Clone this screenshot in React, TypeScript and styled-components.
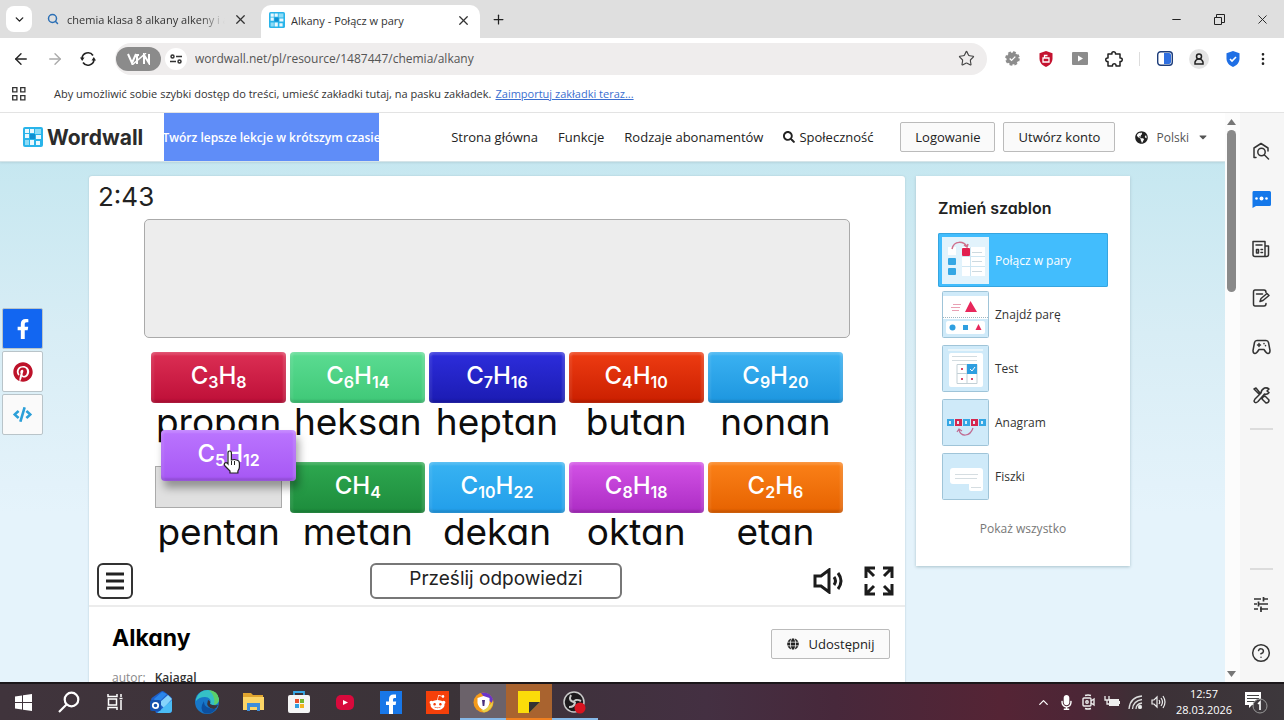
import React from "react";
import styled, { createGlobalStyle } from "styled-components";
import {
  ArrowLeft, ArrowRight, ChevronDown, ChevronUp, Minus, MoreVertical, Plus, RefreshCw,
  Search, Star, X, CircleHelp,
} from "lucide-react";
import {
  FaFacebookF, FaPinterest, FaCode, FaSearch, FaGlobeAmericas, FaGlobe, FaRedditAlien, FaCaretDown, FaMicrophone,
} from "react-icons/fa";

const ui = `"Open Sans", "Noto Sans", sans-serif`;
const game = `Inter, "Open Sans", sans-serif`;

const Global = createGlobalStyle`
  * { box-sizing: border-box; }
  body { margin: 0; font-family: ${ui}; color: #222; background: #fff; }
  button { font: inherit; color: inherit; padding: 0; margin: 0; border: 0; background: none; display: inline-flex; align-items: center; justify-content: center; }
  a { color: inherit; text-decoration: none; }
  svg { flex: none; display: block; }
  h1, h2, p { margin: 0; }
`;

const Window = styled.div`
  display: flex;
  flex-direction: column;
  height: 100vh;
  overflow: hidden;
`;

/* ---------- browser chrome ---------- */

const TabStrip = styled.div`
  display: flex;
  align-items: flex-end;
  height: 38px;
  background: #dfdfdf;
  padding-left: 6px;
`;

const TabMenu = styled.button`
  width: 26px;
  height: 26px;
  margin-bottom: 6px;
  border-radius: 8px;
  background: #fff;
`;

const Tab = styled.div<{ $active?: boolean }>`
  display: flex;
  align-items: center;
  gap: ${(p) => (p.$active ? 6 : 8)}px;
  width: ${(p) => (p.$active ? 219 : 225)}px;
  height: ${(p) => (p.$active ? 33 : 38)}px;
  padding: 0 9px ${(p) => (p.$active ? 3 : 0)}px ${(p) => (p.$active ? 8 : 15)}px;
  margin-left: ${(p) => (p.$active ? 4 : 0)}px;
  border-radius: 10px 10px 0 0;
  background: ${(p) => (p.$active ? "#fff" : "transparent")};
  font-size: 11px;
  color: #333;
`;

const TabTitle = styled.span<{ $fade?: boolean }>`
  flex: 1;
  min-width: 0;
  overflow: hidden;
  white-space: nowrap;
  ${(p) => p.$fade && "mask-image: linear-gradient(90deg, #000 84%, transparent 100%);"}
`;

const NewTab = styled.button`
  width: 28px;
  height: 28px;
  margin: 0 0 5px 4px;
`;

const WindowButtons = styled.div`
  display: flex;
  margin-left: auto;
  height: 38px;
`;

const WindowButton = styled.button`
  width: 43px;
  height: 38px;
`;

const Toolbar = styled.div`
  display: flex;
  align-items: center;
  height: 41px;
  padding: 0 8px 0 6px;
  background: #fff;
`;

const ToolButton = styled.button<{ $w?: number }>`
  width: ${(p) => p.$w ?? 34}px;
  height: 32px;
`;

const AddressBar = styled.div`
  display: flex;
  align-items: center;
  flex: 1;
  height: 32px;
  margin: 0 8px 0 13px;
  padding: 0 12px 0 1px;
  border-radius: 16px;
  background: #efeded;
`;

const VpnBadge = styled.span`
  display: flex;
  align-items: center;
  justify-content: center;
  width: 45px;
  height: 24px;
  border-radius: 12px;
  background: #8b8b8b;
`;

const SiteInfo = styled.button`
  width: 22px;
  height: 22px;
  margin: 0 6px 0 4px;
  border-radius: 11px;
  background: #fff;
`;

const AddressInput = styled.input`
  flex: 1;
  min-width: 0;
  border: 0;
  outline: 0;
  background: transparent;
  font: 12px ${ui};
  color: #555;
`;

const Divider = styled.span`
  width: 1px;
  height: 14px;
  margin: 0 8px;
  background: #ddd;
`;

const Avatar = styled.span`
  display: grid;
  place-items: center;
  width: 20px;
  height: 20px;
  border-radius: 50%;
  background: #e4e4e4;
`;

const Bookmarks = styled.div`
  display: flex;
  align-items: center;
  height: 34px;
  padding: 0 12px 4px;
  border-bottom: 1px solid #e3e3e3;
  font-size: 11px;
  color: #333;
  white-space: nowrap;
  a { margin-left: 4px; color: #3b6fd0; text-decoration: underline; }
  svg { margin-right: 28px; }
`;

/* ---------- page ---------- */

const Body = styled.div`
  display: flex;
  flex: 1;
  min-height: 0;
`;

const Page = styled.div`
  position: relative;
  flex: 1;
  min-width: 0;
  overflow: hidden;
  background: linear-gradient(#c5e7f0 40px, #d8edf5 220px, #e5f3fb 400px);
`;

const Header = styled.header`
  display: flex;
  align-items: center;
  height: 49px;
  padding: 0 16px 0 23px;
  background: #fff;
  border-bottom: 1px solid #d5e4e8;
  box-shadow: 0 1px 2px #b5d3dc;
`;

const Logo = styled.a`
  display: flex;
  align-items: center;
  gap: 4px;
  width: 141px;
  font: 700 21px ${game};
  color: #2b2b2b;
`;

const Promo = styled.a`
  display: flex;
  align-items: center;
  justify-content: center;
  width: 215px;
  height: 48px;
  background: #5f8df8;
  color: #fff;
  font-size: 12px;
  font-weight: 600;
  white-space: nowrap;
`;

const Nav = styled.nav`
  display: flex;
  align-items: center;
  margin-left: auto;
  gap: 20px;
  font-size: 13px;
  white-space: nowrap;
  a { display: flex; align-items: center; gap: 4px; }
`;

const OutlineButton = styled.button<{ $w: number }>`
  width: ${(p) => p.$w}px;
  height: 30px;
  gap: 10px;
  border: 1px solid #bbb;
  border-radius: 2px;
  background: #fafafa;
  font-size: 13px;
`;

const Account = styled.div`
  display: flex;
  gap: 8px;
  margin-left: 7px;
`;

const Language = styled.button`
  gap: 8px;
  font-size: 12px;
  color: #555;
`;

const Columns = styled.main`
  display: flex;
  align-items: flex-start;
  gap: 11px;
  padding: 14px 95px 0 89px;
`;

const GameCard = styled.section`
  flex: 1;
  min-width: 0;
  background: #fff;
  border-radius: 3px;
  box-shadow: 0 0 2px #a9c3cc;
`;

const Timer = styled.div`
  height: 43px;
  padding: 4px 9px;
  font: 26px/34px ${game};
`;

const Tray = styled.div`
  height: 119px;
  margin: 0 55px;
  border: 1px solid #aaa;
  border-radius: 5px;
  background: #ededed;
`;

const Board = styled.div`
  display: grid;
  grid-template-columns: repeat(5, 1fr);
  grid-template-rows: 110px 94px;
  gap: 0 4px;
  padding: 14px 62px 0;
`;

const Cell = styled.div`
  position: relative;
  text-align: center;
`;

const Tile = styled.button<{ $from: string; $to: string; $dragged?: boolean }>`
  position: ${(p) => (p.$dragged ? "absolute" : "static")};
  z-index: 1;
  left: 10px;
  top: -32px;
  display: block;
  width: 100%;
  height: 51px;
  padding-bottom: 4px;
  border-radius: 4px;
  background: linear-gradient(${(p) => p.$from}, ${(p) => p.$to});
  box-shadow: inset 0 3px 2px rgba(255, 255, 255, 0.14), inset -3px 0 2px rgba(255, 255, 255, 0.12),
    inset 3px 0 2px rgba(255, 255, 255, 0.08), inset 0 -3px 2px rgba(0, 0, 0, 0.12)
    ${(p) => p.$dragged && ", 3px 7px 8px rgba(0, 0, 0, 0.35)"};
  color: #fff;
  font: 500 24px/44px ${game};
  sub { font-size: 16px; line-height: 0; vertical-align: -4px; font-weight: 600; }
`;

const Slot = styled.div`
  height: 42px;
  margin: 4px 4px 5px;
  border: 1px solid #aaa;
  background: #e0e0e0;
`;

const Label = styled.div`
  font: 37px/37px ${game};
  font-feature-settings: "cv11";
  color: #0d0d0d;
`;

const Pointer = styled.svg`
  position: absolute;
  z-index: 2;
  left: 72px;
  top: -12px;
`;

const Controls = styled.div`
  display: grid;
  grid-template-columns: 1fr 252px 1fr;
  align-items: center;
  height: 51px;
  padding: 0 10px 0 8px;
  border-bottom: 2px solid #ececec;
`;

const MenuButton = styled.button`
  width: 36px;
  height: 36px;
  border: 2px solid #333;
  border-radius: 6px;
`;

const SubmitButton = styled.button`
  height: 36px;
  border: 2px solid #777;
  border-radius: 6px;
  font: 19px ${game};
  padding-bottom: 4px;
`;

const RightControls = styled.div`
  display: flex;
  align-items: center;
  justify-content: flex-end;
  gap: 18px;
`;

const Info = styled.div`
  display: flex;
  align-items: flex-start;
  justify-content: space-between;
  padding: 16px 15px 40px 23px;
`;

const Title = styled.h1`
  font: 700 23px/30px ${game};
  font-feature-settings: "cv11";
  color: #000;
`;

const Author = styled.p`
  margin-top: 16px;
  font-size: 12px;
  line-height: 18px;
  color: #888;
  a { margin-left: 6px; color: #333; font-weight: 600; }
`;

const ShareWrap = styled.div`
  padding-top: 6px;
`;

const Templates = styled.aside`
  width: 214px;
  padding: 20px 22px 27px;
  background: #fff;
  box-shadow: 0 1px 3px #a9c3cc;
`;

const TemplatesTitle = styled.h2`
  margin-bottom: 13px;
  font: 600 16px/24px ${game};
  font-feature-settings: "cv11";
  white-space: nowrap;
`;

const Template = styled.a<{ $active?: boolean }>`
  display: flex;
  align-items: center;
  gap: 6px;
  height: 54px;
  padding-left: 4px;
  border-radius: 2px;
  font-size: 12px;
  background: ${(p) => (p.$active ? "#42bdfd" : "transparent")};
  color: ${(p) => (p.$active ? "#fff" : "#333")};
  box-shadow: ${(p) => (p.$active ? "inset 0 0 0 1px #36a5e0" : "none")};
`;

const ShowAll = styled.a`
  display: block;
  margin-top: 16px;
  text-align: center;
  font-size: 12px;
  line-height: 20px;
  color: #777;
`;

const Social = styled.div`
  position: absolute;
  left: 2px;
  top: 195px;
  display: grid;
  gap: 2px;
`;

const SocialButton = styled.a<{ $bg: string; $fg: string }>`
  display: grid;
  place-items: center;
  width: 41px;
  height: 41px;
  border: 1px solid #b9c4c9;
  border-radius: 2px;
  background: ${(p) => p.$bg};
  color: ${(p) => p.$fg};
`;

const Scrollbar = styled.div`
  display: flex;
  flex-direction: column;
  align-items: center;
  justify-content: space-between;
  width: 15px;
  padding: 6px 2px 5px 0;
  background: #fcfcfc;
`;

const ScrollTrack = styled.div`
  flex: 1;
  padding-top: 5px;
`;

const Thumb = styled.div`
  width: 9px;
  height: 30%;
  border-radius: 5px;
  background: #8a8a8a;
`;

const SidePanel = styled.aside`
  display: flex;
  flex-direction: column;
  align-items: center;
  width: 44px;
  padding: 13px 2px 5px 0;
  background: #f6f6f6;
  color: #333;
`;

const SideButton = styled.button`
  width: 40px;
  height: 49px;
  flex: none;
`;

const SideRule = styled.span<{ $push?: boolean }>`
  width: 23px;
  height: 2px;
  margin-top: ${(p) => (p.$push ? "auto" : "8px")};
  margin-bottom: ${(p) => (p.$push ? "9px" : "0")};
  background: #dcdcdc;
`;

/* ---------- taskbar ---------- */

const Taskbar = styled.footer`
  display: flex;
  align-items: stretch;
  height: 38px;
  border-top: 2px solid #1b171a;
  background: linear-gradient(90deg, #40343c 0, #3b3338 35%, #443042 55%, #47283b 65%, #552435 78%, #4c2636 84%, #3c3036 89%, #3d383c 100%);
  color: #fff;
`;

const TaskItem = styled.button<{ $tint?: string; $line?: string }>`
  width: 46px;
  background: ${(p) => p.$tint ?? "transparent"};
  box-shadow: ${(p) => (p.$line ? `inset 0 -2px 0 ${p.$line}` : "none")};
`;

const StatusArea = styled.div`
  display: flex;
  align-items: center;
  gap: 8px;
  margin-left: auto;
  padding-right: 16px;
`;

const Clock = styled.div`
  width: 60px;
  margin-right: 2px;
  text-align: center;
  font-size: 11px;
  line-height: 16px;
`;

/* ---------- drawings ---------- */

const WordwallMark = ({ size }: { size: number }) => (
  <svg width={size} height={size} viewBox="0 0 20 20">
    <rect width="20" height="20" rx="2" fill="#29b4ea" />
    <path fill="#e9f8fe" d="M2 2h4v4H2zM7 2h4v4H7zM2 7h4v4H2zM13 8h5v4h-5zM7 13h4v5H7zM13 14h4v4h-4z" />
    <path fill="#8ddcf7" d="M12 2h6v5h-6zM2 13h4v5H2z" />
    <path fill="#0f8fd0" d="M7 7h5v5H7z" />
  </svg>
);

const line = { fill: "none", stroke: "currentColor", strokeWidth: 1.5, strokeLinecap: "round", strokeLinejoin: "round" } as const;

const Thumbnail = ({ kind }: { kind: number }) => (
  <svg width="47" height="47" viewBox="0 0 47 47">
    <rect x=".5" y=".5" width="46" height="46" rx="1" fill={kind === 1 ? "#fff" : "#cfeaf9"} stroke="#9fc4d8" />
    {kind === 0 && (
      <g>
        <rect width="47" height="47" fill="#e2f3fc" />
        <path fill="#fff" d="M6 10h8v8H6zM20 10h23v29H20z" />
        <path stroke="#cfe6f2" d="M28.500 10v29M20 19.500h23M20 29.500h23" />
        <path fill="none" stroke="#d0708c" strokeWidth="1.500" d="M10 12c2-9 12-8 15-2M22 8l3 2 1-3" />
        <rect x="20" y="11" width="8" height="8" rx="1" fill="#e2204f" />
        <rect x="6" y="21" width="8" height="7" rx="1" fill="#35a7e4" />
        <rect x="6" y="31" width="8" height="7" rx="1" fill="#35a7e4" />
        <path stroke="#cdd9df" d="M30 15.500h10M30 24.500h10M30 34.500h10" />
      </g>
    )}
    {kind === 1 && (
      <g>
        <path fill="#cfeaf9" d="M1 1h45v4H1zM1 28h45v18H1z" />
        <path stroke="#9db5c0" strokeDasharray="1 1" d="M1 26.500h45" />
        <path fill="#e8275b" d="M28.500 10l6.500 11H23zM36 34l3 5.500h-6z" />
        <path stroke="#e9a0b3" d="M11 13.500h8M9 16.500h9M10 19.500h7" />
        <rect x="4" y="30" width="39" height="13" rx="2" fill="#fff" />
        <path fill="#e8275b" d="M36.500 33l3 6h-6z" />
        <circle cx="10.500" cy="36.500" r="3" fill="#2f9fe0" />
        <rect x="21" y="34" width="5" height="5" fill="#2f9fe0" />
      </g>
    )}
    {kind === 2 && (
      <g>
        <rect x="6" y="4" width="35" height="2" fill="#e8f5fb" />
        <rect x="7" y="8" width="34" height="34" rx="2" fill="#fff" />
        <path stroke="#d3dce0" d="M10 11.500h25M10 15.500h25" />
        <path fill="none" stroke="#c3d0d6" d="M15 19.500h20v19H15zM15 28.500h20M25 19v19" />
        <rect x="25" y="19" width="10" height="10" fill="#2f9fe0" />
        <path fill="none" stroke="#fff" d="M28 24l2 2 3-4" />
        <path fill="#d84a6a" d="M19 23h2v2h-2zM19 33h2v2h-2zM29 33h2v2h-2z" />
      </g>
    )}
    {kind === 3 && (
      <g>
        {[0, 1, 2, 3, 4].map((i) => (
          <g key={i}>
            <rect x={5 + i * 8} y="20" width="7" height="7" fill={i % 2 ? "#d5284f" : "#35a7e4"} />
            <rect x={7 + i * 8} y="22" width="2" height="3" fill="#d9eefa" />
          </g>
        ))}
        <path fill="none" stroke="#c06a90" strokeWidth="1.200" d="M17 31c2 7 11 7 14-2M15 33l2-3 3 2" />
      </g>
    )}
    {kind === 4 && (
      <g>
        <rect x="8" y="15" width="33" height="16" rx="3" fill="#fff" />
        <rect x="27" y="28" width="14" height="10" rx="2" fill="#fff" />
        <path stroke="#d5dde1" d="M13 21.500h23M13 25.500h22M29 34.500h10" />
      </g>
    )}
  </svg>
);

const Shield = ({ color, children }: { color: string; children: React.ReactNode }) => (
  <svg width="16" height="16" viewBox="0 0 16 16">
    <path fill={color} d="M8 0l6.500 2.300v5.200c0 4-2.700 7-6.500 8.500-3.800-1.500-6.500-4.500-6.500-8.500V2.300z" />
    {children}
  </svg>
);

const tiles: { name: string; formula: [string, string][]; from: string; to: string }[] = [
  { name: "propan", formula: [["C", "3"], ["H", "8"]], from: "#dc2f54", to: "#be0f38" },
  { name: "heksan", formula: [["C", "6"], ["H", "14"]], from: "#5bdc92", to: "#3fc877" },
  { name: "heptan", formula: [["C", "7"], ["H", "16"]], from: "#2d2ddc", to: "#1b1bb2" },
  { name: "butan", formula: [["C", "4"], ["H", "10"]], from: "#ee3c12", to: "#ca1f00" },
  { name: "nonan", formula: [["C", "9"], ["H", "20"]], from: "#3bb2f2", to: "#1d96df" },
  { name: "pentan", formula: [["C", "5"], ["H", "12"]], from: "#bb75ff", to: "#a657f4" },
  { name: "metan", formula: [["CH", "4"]], from: "#2ea850", to: "#1d8c3c" },
  { name: "dekan", formula: [["C", "10"], ["H", "22"]], from: "#38b3f2", to: "#229eea" },
  { name: "oktan", formula: [["C", "8"], ["H", "18"]], from: "#d353e6", to: "#ac2cc4" },
  { name: "etan", formula: [["C", "2"], ["H", "6"]], from: "#fb8118", to: "#e66200" },
];

const templates = ["Połącz w pary", "Znajdź parę", "Test", "Anagram", "Fiszki"];

export default function App() {
  return (
    <Window>
      <Global />
      <TabStrip>
        <TabMenu aria-label="Karty"><ChevronDown size={13} strokeWidth={2.5} /></TabMenu>
        <Tab>
          <Search size={12} strokeWidth={3} color="#2b6fb5" />
          <TabTitle $fade>chemia klasa 8 alkany alkeny i a</TabTitle>
          <button aria-label="Zamknij kartę"><X size={15} /></button>
        </Tab>
        <Tab $active>
          <WordwallMark size={16} />
          <TabTitle>Alkany - Połącz w pary</TabTitle>
          <button aria-label="Zamknij kartę"><X size={15} /></button>
        </Tab>
        <NewTab aria-label="Nowa karta"><Plus size={15} /></NewTab>
        <WindowButtons>
          <WindowButton aria-label="Minimalizuj"><Minus size={13} /></WindowButton>
          <WindowButton aria-label="Przywróć">
            <svg width="11" height="11" viewBox="0 0 11 11" fill="none" stroke="#222"><path d="M.5 3.500h7v7h-7zM2.500 3V.5h8v8H8" /></svg>
          </WindowButton>
          <WindowButton aria-label="Zamknij"><X size={15} strokeWidth={1.5} /></WindowButton>
        </WindowButtons>
      </TabStrip>

      <Toolbar>
        <ToolButton $w={29} aria-label="Wstecz"><ArrowLeft size={18} strokeWidth={1.8} /></ToolButton>
        <ToolButton $w={39} aria-label="Dalej"><ArrowRight size={18} strokeWidth={1.8} color="#aaa" /></ToolButton>
        <ToolButton $w={28} aria-label="Odśwież">
          <svg width="16" height="16" viewBox="0 0 16 16" fill="none" stroke="#222" strokeWidth="1.600"><path d="M2 7.500a6 6 0 0 1 11-3M14 8.500a6 6 0 0 1-11 3" /><path fill="#222" stroke="none" d="M0 6.500h4.500L2.200 10zM11.500 9.500H16L13.800 6z" /></svg>
        </ToolButton>
        <AddressBar>
          <VpnBadge>
            <svg width="24" height="12" viewBox="0 0 24 12" fill="none" stroke="#fff" strokeWidth="2">
              <path d="M1 1l4 9 4-9M10 11V2h2M17 11V2l5 8V1" /><path d="M5 12L19 0" strokeWidth="1.500" />
            </svg>
          </VpnBadge>
          <SiteInfo aria-label="Informacje o witrynie">
            <svg width="12" height="10" viewBox="0 0 12 10" fill="none" stroke="#333" strokeWidth="1.500">
              <circle cx="2.500" cy="2.500" r="1.500" /><circle cx="9.500" cy="7.500" r="1.500" /><path d="M6 2.500h6M0 7.500h6" />
            </svg>
          </SiteInfo>
          <AddressInput aria-label="Adres" defaultValue="wordwall.net/pl/resource/1487447/chemia/alkany" />
          <Star size={17} strokeWidth={1.6} color="#444" />
        </AddressBar>
        <ToolButton aria-label="Weryfikacja">
          <svg width="15" height="15" viewBox="0 0 16 16"><circle cx="8" cy="8" r="6.500" fill="#8c8c8c" /><circle cx="8" cy="8" r="6.800" fill="none" stroke="#8c8c8c" strokeWidth="2" strokeDasharray="3 2.300" /><path d="M5 8l2 2 4-4" fill="none" stroke="#fff" strokeWidth="1.500" /></svg>
        </ToolButton>
        <ToolButton aria-label="Blokada reklam">
          <Shield color="#c4122f"><path d="M5 7h6v4H5zM6.500 7V4.500h3" fill="none" stroke="#fff" strokeWidth="1.300" /></Shield>
        </ToolButton>
        <ToolButton aria-label="Wideo">
          <svg width="16" height="13" viewBox="0 0 16 13"><rect width="16" height="13" rx="1" fill="#8c8c8c" /><path fill="#fff" d="M6 3.500l5 3-5 3z" /></svg>
        </ToolButton>
        <ToolButton aria-label="Rozszerzenia">
          <svg width="18" height="18" viewBox="0 0 18 18" fill="none" stroke="#222" strokeWidth="1.500" strokeLinejoin="round"><path d="M3 4h4c-1-3 4-3 3.500 0H15v4c3-.5 3 4 0 3.500V16h-4c.5-3-4-3-3.500 0H3v-4.500c-3 .5-3-4 0-3.500z" /></svg>
        </ToolButton>
        <Divider />
        <ToolButton aria-label="Panel boczny">
          <svg width="16" height="15" viewBox="0 0 16 15"><rect x=".7" y=".7" width="14.600" height="13.600" rx="3" fill="#fff" stroke="#1d3d7a" strokeWidth="1.400" /><path fill="#2f6fe0" d="M7 2h5q2 0 2 2v7q0 2-2 2H7z" /></svg>
        </ToolButton>
        <ToolButton aria-label="Profil">
          <Avatar><svg width="10" height="12" viewBox="0 0 10 12" fill="none" stroke="#222" strokeWidth="1.500"><circle cx="5" cy="3.500" r="2.500" /><path d="M1 11V9q1-3 4-3t4 3v2z" /></svg></Avatar>
        </ToolButton>
        <ToolButton aria-label="Ochrona">
          <Shield color="#1f6fe5"><path d="M5 8l2 2 4-4" fill="none" stroke="#fff" strokeWidth="1.600" /></Shield>
        </ToolButton>
        <ToolButton $w={26} aria-label="Menu"><MoreVertical size={16} /></ToolButton>
      </Toolbar>

      <Bookmarks>
        <svg width="14" height="14" viewBox="0 0 14 14" fill="none" stroke="#333" strokeWidth="1.300"><path d="M.7.7h4.200v4.200H.7zM8.700.7h4.200v4.200H8.700zM.7 8.700h4.200v4.200H.7zM8.700 8.700h4.200v4.200H8.700z" /></svg>
        Aby umożliwić sobie szybki dostęp do treści, umieść zakładki tutaj, na pasku zakładek.
        <a href="#import">Zaimportuj zakładki teraz...</a>
      </Bookmarks>

      <Body>
        <Page>
          <Header>
            <Logo href="#home"><WordwallMark size={20} />Wordwall</Logo>
            <Promo href="#promo">Twórz lepsze lekcje w krótszym czasie</Promo>
            <Nav>
              <a href="#home">Strona główna</a>
              <a href="#features">Funkcje</a>
              <a href="#plans">Rodzaje abonamentów</a>
              <a href="#community"><FaSearch size={12} />Społeczność</a>
              <Account>
                <OutlineButton $w={95}>Logowanie</OutlineButton>
                <OutlineButton $w={112}>Utwórz konto</OutlineButton>
              </Account>
              <Language><FaGlobeAmericas size={13} color="#222" />Polski<FaCaretDown size={12} /></Language>
            </Nav>
          </Header>

          <Columns>
            <GameCard>
              <Timer>2:43</Timer>
              <Tray />
              <Board>
                {tiles.map((t) => {
                  const dragged = t.name === "pentan";
                  return (
                    <Cell key={t.name}>
                      {dragged && <Slot />}
                      <Tile $from={t.from} $to={t.to} $dragged={dragged}>
                        {t.formula.map(([el, n]) => (
                          <React.Fragment key={el}>{el}<sub>{n}</sub></React.Fragment>
                        ))}
                      </Tile>
                      {dragged && (
                        <Pointer width="18" height="24" viewBox="0 0 18 24">
                          <path d="M5 14V3q0-2 1.700-2t1.700 2v7q3-1 5 0 3 .5 3 3v4q0 2-1.500 4v2H7v-2L2 16q-1.500-2 0-3t3 1z" fill="#fff" stroke="#222" strokeWidth="1.200" />
                          <path d="M8.500 11v4M11.500 11v4" stroke="#222" />
                        </Pointer>
                      )}
                      <Label>{t.name}</Label>
                    </Cell>
                  );
                })}
              </Board>
              <Controls>
                <MenuButton aria-label="Menu gry">
                  <svg width="18" height="18" viewBox="0 0 18 18" stroke="#222" strokeWidth="3"><path d="M0 2h18M0 9h18M0 16h18" /></svg>
                </MenuButton>
                <SubmitButton>Prześlij odpowiedzi</SubmitButton>
                <RightControls>
                  <button aria-label="Dźwięk">
                    <svg width="32" height="26" viewBox="0 0 32 26" fill="none" stroke="#1c1c1c" strokeWidth="3"><path d="M2 8h6l8-6v22l-8-6H2zM21 9q3 4 0 8M25 5q6 8 0 16" /></svg>
                  </button>
                  <button aria-label="Pełny ekran">
                    <svg width="32" height="32" viewBox="0 0 32 32" fill="none" stroke="#1c1c1c" strokeWidth="3"><path d="M3 13V3h9M3 3l8 8M20 3h9v10M29 3l-8 8M3 19v10h9M3 29l8-8M29 19v10h-9M29 29l-8-8" /></svg>
                  </button>
                </RightControls>
              </Controls>
              <Info>
                <div>
                  <Title>Alkany</Title>
                  <Author>autor: <a href="#author">Kajagal</a></Author>
                </div>
                <ShareWrap><OutlineButton $w={119}><FaGlobe size={12} />Udostępnij</OutlineButton></ShareWrap>
              </Info>
            </GameCard>

            <Templates>
              <TemplatesTitle>Zmień szablon</TemplatesTitle>
              {templates.map((name, i) => (
                <Template key={name} href="#template" $active={i === 0}><Thumbnail kind={i} />{name}</Template>
              ))}
              <ShowAll href="#all">Pokaż wszystko</ShowAll>
            </Templates>
          </Columns>

          <Social>
            <SocialButton href="#facebook" aria-label="Facebook" $bg="#1266f1" $fg="#fff"><FaFacebookF size={20} /></SocialButton>
            <SocialButton href="#pinterest" aria-label="Pinterest" $bg="#fff" $fg="#bd1229"><FaPinterest size={20} /></SocialButton>
            <SocialButton href="#embed" aria-label="Kod" $bg="#fafafa" $fg="#2b9fd8"><FaCode size={19} /></SocialButton>
          </Social>
        </Page>

        <Scrollbar>
          <svg width="9" height="6" viewBox="0 0 9 6"><path fill="#777" d="M4.500 0L9 6H0z" /></svg>
          <ScrollTrack><Thumb /></ScrollTrack>
          <svg width="9" height="6" viewBox="0 0 9 6"><path fill="#777" d="M0 0h9L4.500 6z" /></svg>
        </Scrollbar>

        <SidePanel>
          <SideButton aria-label="Wyszukiwanie">
            <svg width="18" height="18" viewBox="0 0 18 18" {...line}><path d="M4 15.500H2V6l7-4.500L16 6v3" /><circle cx="9.500" cy="10" r="3.700" /><path d="M12.500 13l4 4" /></svg>
          </SideButton>
          <SideButton aria-label="Czat">
            <svg width="19" height="17" viewBox="0 0 19 17"><path fill="#1478ea" d="M1.500 0h16Q19 0 19 1.500v12q0 1.500-1.500 1.500H4l-3.500 2V1.500Q.5 0 1.500 0z" /><g fill="#fff"><circle cx="4.500" cy="7.500" r="1.300" /><circle cx="9.500" cy="7.500" r="2" /><circle cx="14.500" cy="7.500" r="1.300" /></g></svg>
          </SideButton>
          <SideButton aria-label="Wiadomości">
            <svg width="18" height="18" viewBox="0 0 18 18" {...line}><path d="M13 16.500H3q-2 0-2-2V1.500h12zM13 6h3.500v8.500q0 2-2 2T13 15M4 5h6M9 9.500h1.500M9 12.500h1.500M4.500 9.500h2v3.500h-2z" /></svg>
          </SideButton>
          <SideButton aria-label="Notatki">
            <svg width="18" height="18" viewBox="0 0 18 18" {...line}><path d="M14 3.500Q14 1 12 1H3Q1.500 1 1.500 3v12q0 2 1.500 2h9q2 0 2-2.500M4.500 5h6M8 12.500l1-3 6-5 2 2-6 5z" /></svg>
          </SideButton>
          <SideButton aria-label="Gry">
            <svg width="19" height="16" viewBox="0 0 19 16" {...line}><path d="M5 1.500h9q2 0 2.500 2l1.500 8q0 3-2 3-1.500 0-4-4H7q-2.500 4-4 4-2 0-2-3l1.500-8q.5-2 2.500-2zM5.500 6h3M7 4.500v3M12 4.500v.2M13.500 6.500v.2" /></svg>
          </SideButton>
          <SideButton aria-label="Narzędzia">
            <svg width="17" height="17" viewBox="0 0 17 17" {...line}><path d="M1 2l2-1 4 5-1 1zM10 10l2-1 4 4q0 3-3 3l-4-4zM11.500 1q3-.5 4.500 1l-2 2 2 1.500q-1.500 2.500-4.500 1.500L5 14.500q-3 2.500-4-.5l1-2 6-6q0-3 3.500-5z" /></svg>
          </SideButton>
          <SideRule />
          <SideRule $push />
          <SideButton aria-label="Ustawienia panelu">
            <svg width="14" height="16" viewBox="0 0 14 16" fill="none" stroke="#333" strokeWidth="1.700"><path d="M0 3h7M9 3h5M9.500 1v4.500M0 8h3M5 8h9M4.500 5.500v5M0 13h4M6 13h8M7 10.500V16" /></svg>
          </SideButton>
          <SideButton aria-label="Pomoc"><CircleHelp size={20} strokeWidth={1.8} /></SideButton>
        </SidePanel>
      </Body>

      <Taskbar>
        <TaskItem aria-label="Start">
          <svg width="17" height="17" viewBox="0 0 17 17" fill="#fff"><path d="M0 2.500l7-1V8H0zM8 1.300L17 0v8H8zM0 9h7v6.500l-7-1zM8 9h9v8l-9-1.300z" /></svg>
        </TaskItem>
        <TaskItem aria-label="Szukaj">
          <svg width="22" height="22" viewBox="0 0 22 22" fill="none" stroke="#fff" strokeWidth="2.200"><circle cx="13.500" cy="8.500" r="6.800" /><path d="M8.500 13.500L1 21" /></svg>
        </TaskItem>
        <TaskItem aria-label="Widok zadań">
          <svg width="17" height="16" viewBox="0 0 17 16" fill="none" stroke="#fff" strokeWidth="1.500"><path d="M1 0v2.500h9V0M1 16v-2.500h9V16M1.500 5h8v6h-8zM14 0v3M14 6v10M12.500 4.500h3" /></svg>
        </TaskItem>
        <TaskItem aria-label="Outlook">
          <svg width="22" height="22" viewBox="0 0 22 22"><path fill="#1e5fc9" d="M1 9Q1 7 3 6L11 .5q1.500-1 3 0L21 6q1 1 1 3v10q0 3-3 3H6z" /><path fill="#2a86ea" d="M4 8L12 1l5 2L7 13z" /><path fill="#86d3fb" d="M9 12l9-8 4 4-8 9z" /><path fill="#4bbcf5" d="M7 22l15-13v10q0 3-3 3z" /><rect y="9" width="11" height="11" rx="2" fill="#1552ad" /><circle cx="5.500" cy="14.500" r="2.700" fill="none" stroke="#fff" strokeWidth="1.800" /></svg>
        </TaskItem>
        <TaskItem aria-label="Edge">
          <svg width="24" height="24" viewBox="0 0 24 24"><circle cx="12" cy="12" r="12" fill="#1777c8" /><path fill="#35c1c6" d="M1 9Q4 0 13 0q9 1 11 9c0 6-6 7-9 5 2-4-1-7-5-7Q4 7 1 11z" /><path fill="#5bd06b" d="M14 0q9 1 10 9 0 5-5 6 2-8-5-15z" /><path fill="#0d4f9e" d="M9 11q-1 8 12 8-5 6-12 4-5-4 0-12z" /><path fill="#3d3439" d="M13 10q3 1 2 4 3 2 8 1-1 3-4 4-9-1-6-9z" /></svg>
        </TaskItem>
        <TaskItem aria-label="Eksplorator plików">
          <svg width="21" height="18" viewBox="0 0 21 18"><path fill="#e0a52f" d="M0 0h8l2 2h10v15H0z" /><path fill="#fbd566" d="M0 4h21v13H0z" /><path fill="#3d8edb" d="M4 10h13v8h-3v-4H7v4H4z" /></svg>
        </TaskItem>
        <TaskItem aria-label="Microsoft Store">
          <svg width="22" height="22" viewBox="0 0 22 22"><path fill="none" stroke="#38a9e8" strokeWidth="1.800" d="M6 5V1h10v4" /><rect y="4" width="22" height="18" rx="2" fill="#f5f5f5" /><path fill="#e8502f" d="M7 8h4v4H7z" /><path fill="#75b72f" d="M12 8h4v4h-4z" /><path fill="#2f9fe0" d="M7 13h4v4H7z" /><path fill="#f3b51f" d="M12 13h4v4h-4z" /></svg>
        </TaskItem>
        <TaskItem aria-label="YouTube">
          <svg width="18" height="15" viewBox="0 0 18 15"><rect width="18" height="15" rx="5" fill="#d80a3c" /><path fill="#fff" d="M7 5l5 2.500L7 10z" /></svg>
        </TaskItem>
        <TaskItem aria-label="Facebook">
          <svg width="22" height="23" viewBox="0 0 22 23"><rect width="22" height="23" fill="#1877e8" /><path fill="#fff" d="M9 23v-9H6v-3.500h3V8q0-4.500 4.500-4.500H16V7h-1.700Q13 7 13 8.500v2h3.200l-.6 3.500H13v9z" /></svg>
        </TaskItem>
        <TaskItem aria-label="Reddit">
          <svg width="23" height="23" viewBox="0 0 23 23"><rect width="23" height="23" fill="#f5400a" /><FaRedditAlien x={3} y={3} size={17} color="#fff" /></svg>
        </TaskItem>
        <TaskItem $tint="#6b626a" $line="#86b9e8" aria-label="Przeglądarka">
          <svg width="21" height="21" viewBox="0 0 21 21"><circle cx="10.500" cy="10.500" r="10" fill="#f49a1a" /><path fill="#6a35c9" d="M8 1q8-2 12 6l-1 4-8-6z" /><path fill="#e6d04a" d="M20 9q0 9-9 11.500L8 18l9-5z" /><path fill="#fff" d="M10.500 4l6 2v5q-1 5-6 7-5-2-6-7V6z" /><path fill="#4a2f7d" d="M9 8h3l-.7 6H9.700z" /></svg>
        </TaskItem>
        <TaskItem $tint="#a9632f" $line="#f08020" aria-label="Notatki">
          <svg width="22" height="22" viewBox="0 0 22 22"><path fill="#fbdc0a" d="M0 0h22v11L11 22H0z" /><path fill="#333" d="M11 11h11L11 22z" /></svg>
        </TaskItem>
        <TaskItem $line="#86b9e8" aria-label="OBS">
          <svg width="24" height="23" viewBox="0 0 24 23"><circle cx="11" cy="11" r="10" fill="#1d1a1d" stroke="#c9c9c9" strokeWidth="1.500" /><path fill="none" stroke="#c9c9c9" strokeWidth="2" d="M8 4q-3 6 3 7M18 10q-6-3-8 2M6 16q6 0 6-5" /><circle cx="17" cy="17" r="5.500" fill="#d81420" /></svg>
        </TaskItem>
        <StatusArea>
          <ChevronUp size={15} />
          <FaMicrophone size={15} />
          <svg width="14" height="16" viewBox="0 0 14 16" fill="none" stroke="#eee" strokeWidth="1.400"><rect x="1" y="4" width="8" height="8" rx="1" /><circle cx="5" cy="8" r="1.200" /><path d="M9 7l3-2v6L9 9M3 1.500q3-1 6 0M3 14.500q3 1 6 0" /></svg>
          <svg width="16" height="12" viewBox="0 0 16 12"><path fill="#eee" d="M5 3h10v2h1v3h-1v2H5z" /><path fill="none" stroke="#eee" strokeWidth="1.300" d="M1 0v4h4V0M3 4v4h3" /></svg>
          <svg width="15" height="14" viewBox="0 0 15 14" fill="none" stroke="#ddd" strokeWidth="1.300"><path d="M1 14Q2 2 14 1M4.500 14Q5 6 14 4.500M8 14q0-5 6-6" /><circle cx="12" cy="12" r="1.500" fill="#fff" /></svg>
          <svg width="15" height="14" viewBox="0 0 15 14" fill="none" stroke="#eee" strokeWidth="1.200"><path d="M1 5h2l3-3v10L3 9H1zM8 5q1.500 2 0 4M10 3q3 4 0 8M12 1q4 6 0 12" /></svg>
          <Clock>12:57<br />28.03.2026</Clock>
          <svg width="24" height="24" viewBox="0 0 24 24"><path fill="#fff" d="M1 2h16v13H8l-3 3v-3H1z" /><path stroke="#444" d="M3 5.500h12M3 8.500h12M3 11.500h8" /><circle cx="16" cy="16" r="7" fill="#3f3a3e" stroke="#999" /><path fill="none" stroke="#fff" strokeWidth="1.600" d="M14 14l2-2v8" /></svg>
        </StatusArea>
      </Taskbar>
    </Window>
  );
}
